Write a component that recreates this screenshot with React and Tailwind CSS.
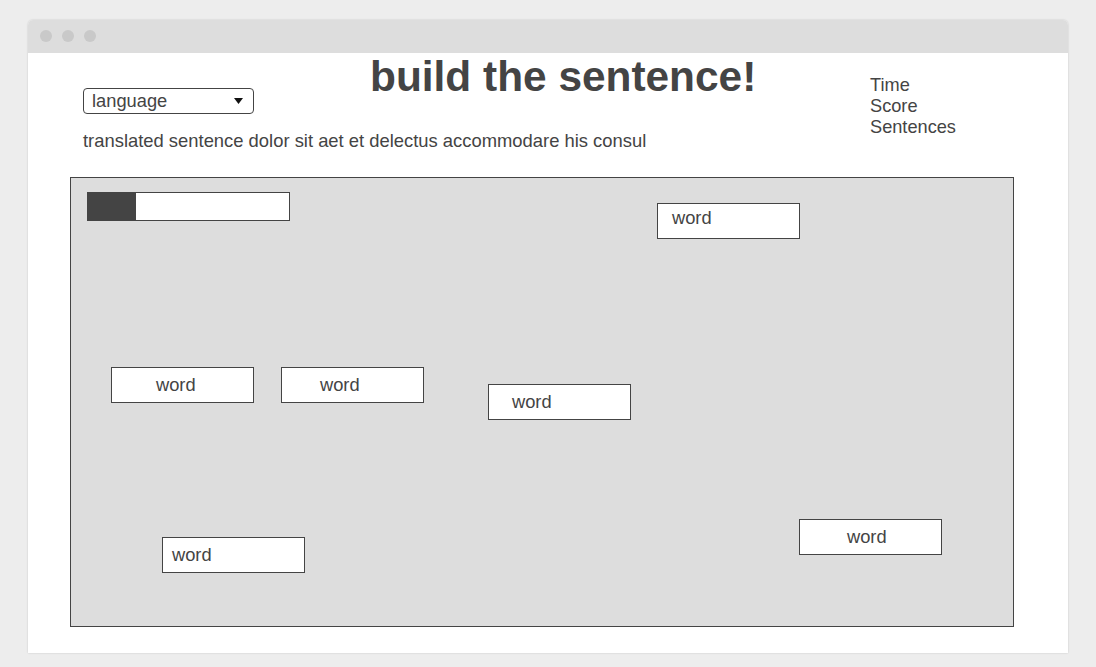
import React from "react";

const words = [
  { left: 586, top: 25, pad: 15, lead: "leading-[28px]" },
  { left: 40, top: 189, pad: 45, lead: "leading-[34px]" },
  { left: 210, top: 189, pad: 39, lead: "leading-[34px]" },
  { left: 417, top: 206, pad: 24, lead: "leading-[34px]" },
  { left: 91, top: 359, pad: 10, lead: "leading-[34px]" },
  { left: 728, top: 341, pad: 48, lead: "leading-[34px]" },
];

export default function App() {
  return (
    <div
      className="w-[1096px] h-[667px] bg-[#ededed] pt-[20px] pl-[28px] overflow-hidden text-[#444444]"
      style={{ fontFamily: '"Liberation Sans", Arial, sans-serif' }}
    >
      <div className="w-[1040px] h-[633px] bg-white rounded-t-[5px] shadow-[0_0_2px_rgba(0,0,0,0.18)] flex flex-col">
        <div className="h-[33px] bg-[#dddddd] rounded-t-[5px] flex items-center pl-[12px] pb-[1px] gap-[10px]">
          <span className="w-[12px] h-[12px] rounded-full bg-[#c9c9c9]" />
          <span className="w-[12px] h-[12px] rounded-full bg-[#c9c9c9]" />
          <span className="w-[12px] h-[12px] rounded-full bg-[#c9c9c9]" />
        </div>

        <div className="flex h-[124px]">
          <div className="w-[842px] pl-[55px]">
            <div className="flex items-start">
              <div className="mt-[35px] w-[171px] h-[26px] border border-[#444444] rounded-[4px] flex items-center justify-between pl-[8px] pr-[10px]">
                <span className="text-[18.3px] leading-[20px]">language</span>
                <svg width="9" height="6" viewBox="0 0 9 6">
                  <polygon points="0,0 9,0 4.5,6" fill="#111" />
                </svg>
              </div>
              <h1 className="ml-[116px] text-[42.4px] leading-[48px] font-bold whitespace-nowrap">
                build the sentence!
              </h1>
            </div>
            <p className="mt-[16px] text-[18.4px] leading-[21px] whitespace-nowrap">
              translated sentence dolor sit aet et delectus accommodare his consul
            </p>
          </div>
          <div className="pt-[22px] text-[18.2px] leading-[21px]">
            <div>Time</div>
            <div>Score</div>
            <div>Sentences</div>
          </div>
        </div>

        <div className="ml-[42px] w-[944px] h-[450px] border border-[#444444] bg-[#dddddd] relative">
          <div className="ml-[16px] mt-[14px] w-[203px] h-[29px] border border-[#444444] bg-white flex">
            <div className="w-[48px] h-full bg-[#444444]" />
          </div>
          {words.map((w, i) => (
            <div
              key={i}
              className={`absolute w-[143px] h-[36px] border border-[#444444] bg-white text-[18.3px] ${w.lead}`}
              style={{ left: w.left, top: w.top, paddingLeft: w.pad - 1 }}
            >
              word
            </div>
          ))}
        </div>
      </div>
    </div>
  );
}
